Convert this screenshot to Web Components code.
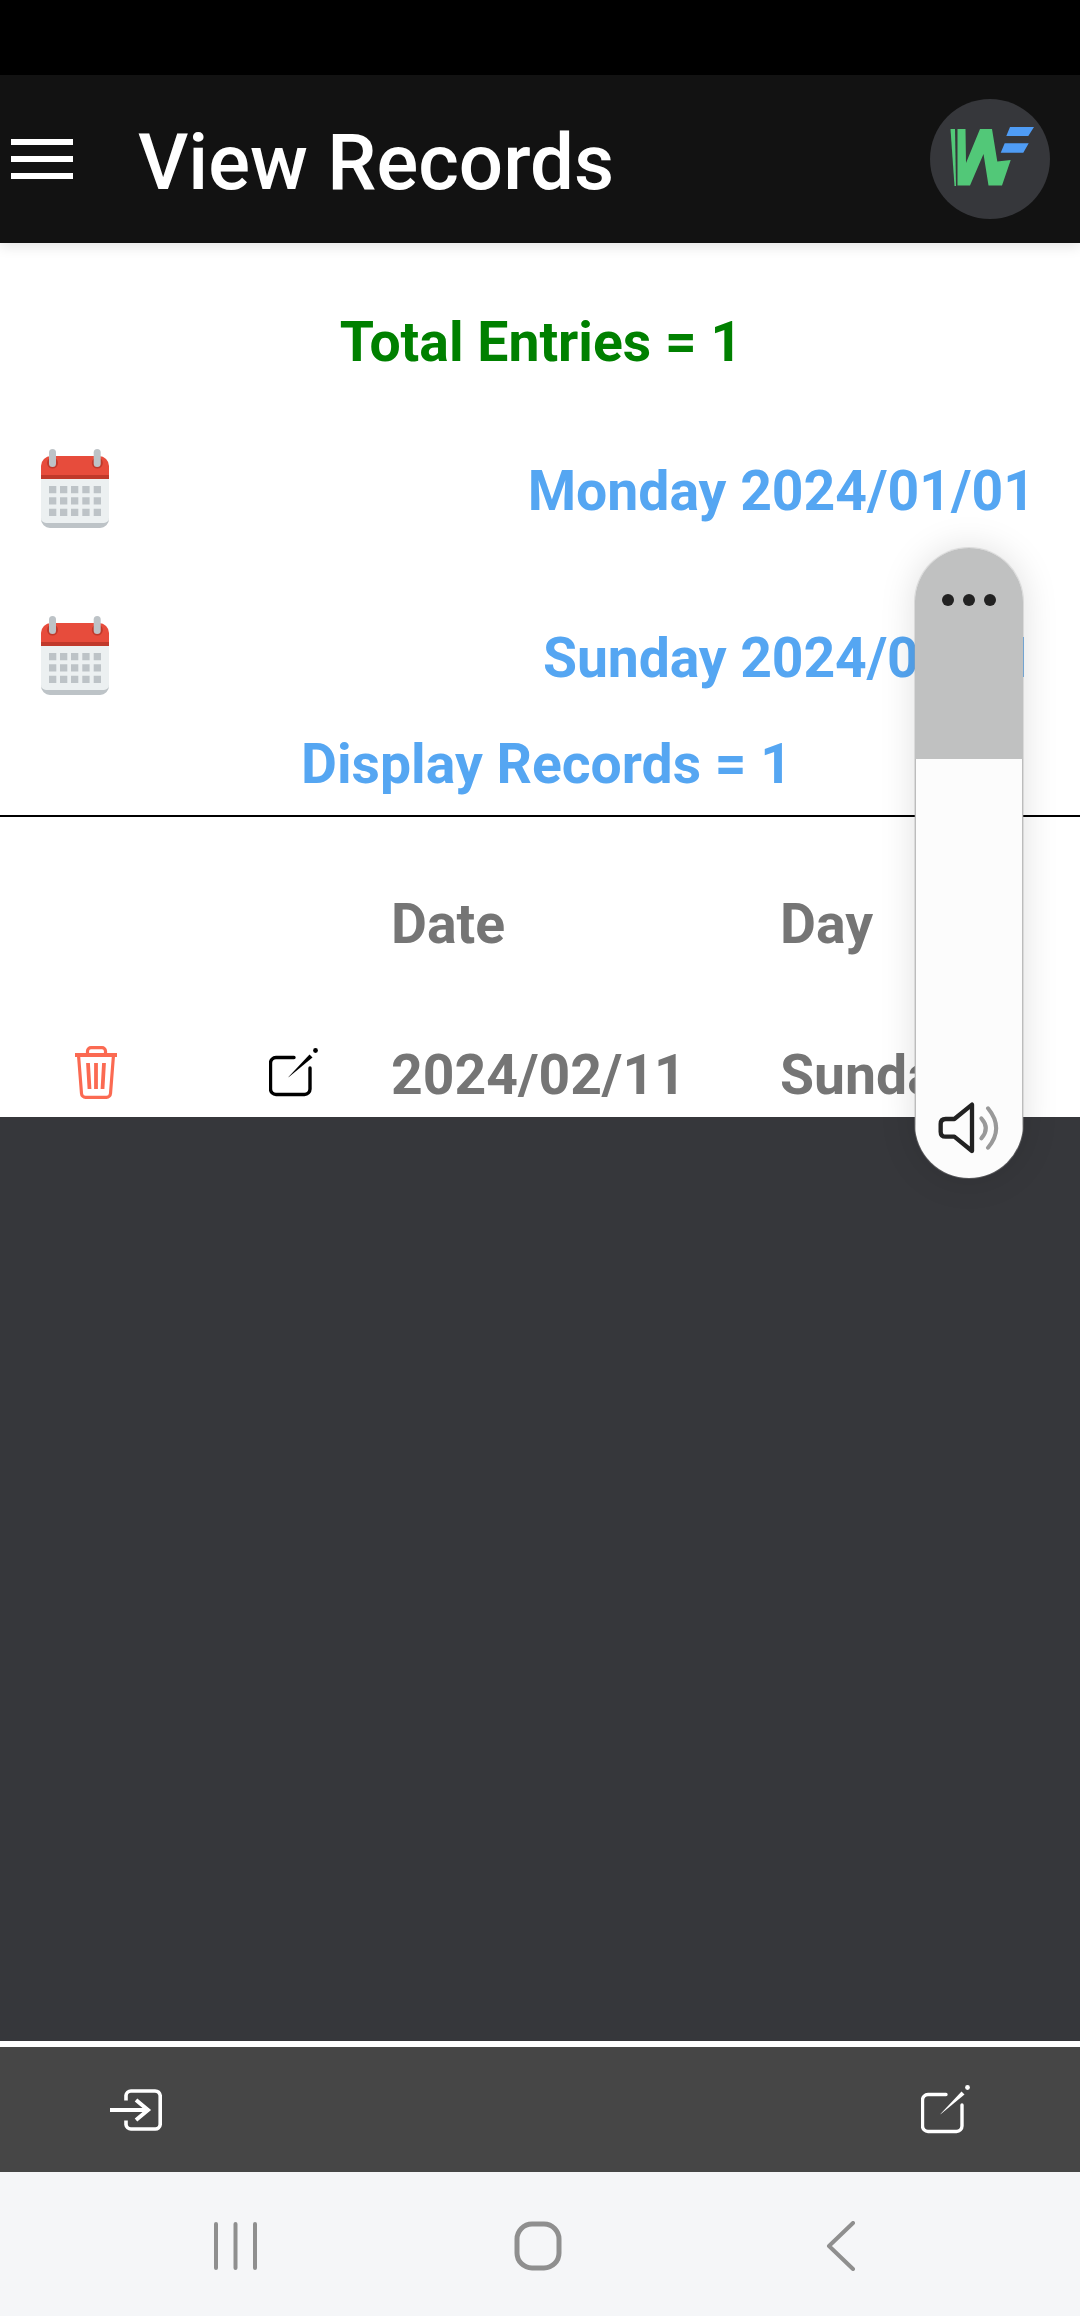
<!DOCTYPE html>
<html lang="en"><head><meta charset="utf-8"><title>View Records</title>
<style>
html,body{margin:0;padding:0;background:#36373b}
body{width:1080px;height:2316px;overflow:hidden;font-family:Roboto,"Liberation Sans",sans-serif}
</style></head><body>
<template id="t-app"><style>
:host{display:flex;flex-direction:column;width:1080px;height:2316px;position:relative;overflow:hidden}
.status{height:75px;background:#000;flex:none}
.content{flex:none;height:874px;background:#fff;display:flex;flex-direction:column;overflow:hidden}
.fill{flex:1;background:#36373b}
.gap{height:6px;background:#fff;flex:none}
</style>
<div class="status"></div><slot name="bar"></slot><div class="content"><slot></slot></div><div class="fill"></div><div class="gap"></div><slot name="foot"></slot><slot name="float"></slot></template>

<template id="t-bar"><style>
:host{display:flex;align-items:center;height:168px;background:#121212;flex:none;position:relative;z-index:1;box-shadow:0 4px 12px rgba(0,0,0,.1);padding:0 30px 0 11px}
.burger{width:62px;display:flex;flex-direction:column;gap:11px;margin-right:65px}
.burger i{display:block;height:6px;background:#fff}
h1{flex:1;margin:0;padding-top:8px;font:500 78px/84px Roboto,sans-serif;color:#fff}
svg{display:block;width:120px;height:120px}
</style><div class="burger"><i></i><i></i><i></i></div><h1><slot></slot></h1>
<svg viewBox="0 0 120 120"><circle cx="60" cy="60" r="60" fill="#36373b"/>
<path d="M20.500 30H25L26 87H24.500Z" fill="#52c878"/>
<path d="M27.500 30H35.500L36 64 50 30H62L67.300 62.500 80.700 61 72 86.500H58.500L53.500 55 40 86.500H27.500Z" fill="#52c878"/>
<path d="M80 28H104L98.300 37H76.300ZM74.700 44.300H98.700L93.300 53.700H70.700Z" fill="#4f9cf5"/></svg></template>

<template id="t-title"><style>
:host{display:block;text-align:center;font:700 55.3px/60px Roboto,sans-serif;color:var(--c,#008000);padding:var(--pad,0)}
</style><slot></slot></template>

<template id="t-date"><style>
:host{display:flex;align-items:center;justify-content:space-between;height:80px;padding:0 var(--r,49px) 0 41px;font:700 55.3px/60px Roboto,sans-serif;color:#55a6f2;margin-top:var(--mt,0);letter-spacing:var(--ls,0)}
svg{display:block;width:68px;height:80px;flex:none}
span{padding-top:6px}
</style><svg viewBox="0 0 68 80">
<path d="M10 7H58A10 10 0 0 1 68 17V30H0V17A10 10 0 0 1 10 7Z" fill="#e74c3c"/>
<rect y="26" width="68" height="4" fill="#c0392b"/>
<path d="M0 30H68V69A10 10 0 0 1 58 79H10A10 10 0 0 1 0 69Z" fill="#ecf0f1"/>
<path d="M0 69V70A9 9 0 0 0 9 79H59A9 9 0 0 0 68 70V69A5 5 0 0 1 63 74H5A5 5 0 0 1 0 69Z" fill="#bdc3c7"/>
<circle cx="11.500" cy="14" r="5.500" fill="#c0392b"/><circle cx="56.300" cy="14" r="5.500" fill="#c0392b"/>
<rect x="8" width="7" height="18" rx="3.500" fill="#bdc3c7"/><rect x="52.700" width="7" height="18" rx="3.500" fill="#bdc3c7"/>
<g fill="#bdc3c7"><path d="M8 37h7.300v7.300H8zM19 37h7.300v7.300H19zM30 37h7.300v7.300H30zM41.300 37h7.300v7.300h-7.300zM52.700 37h7.300v7.300h-7.300zM8 48.300h7.300v7.300H8zM19 48.300h7.300v7.300H19zM30 48.300h7.300v7.300H30zM41.300 48.300h7.300v7.300h-7.300zM52.700 48.300h7.300v7.300h-7.300zM8 59.700h7.300v7.300H8zM19 59.700h7.300v7.300H19zM30 59.700h7.300v7.300H30zM41.300 59.700h7.300v7.300h-7.300zM52.700 59.700h7.300v7.300h-7.300z"/></g>
</svg><span><slot></slot></span></template>

<template id="t-table"><style>
:host{display:grid;grid-template-columns:350px 389px 1fr;padding:0 0 0 41px;border-top:2px solid #000;font:700 55.3px/60px Roboto,sans-serif;color:#757575;white-space:nowrap}
.h{padding-top:78px}.c{padding-top:91px}
.icons{padding-top:91px;display:flex;align-items:flex-start;color:#000}
.trash{display:block;margin-left:34px}
x-edit{margin:2px 0 0 152px}
</style>
<span></span><span class="h">Date</span><span class="h">Day</span>
<div class="icons"><svg class="trash" width="42" height="53" viewBox="0 0 42 53" fill="none" stroke="#fb6a52" stroke-width="3.200" stroke-linejoin="round"><path d="M0 9H42" stroke-width="3.800"/><path d="M12.500 8V5A3.500 3.500 0 0 1 16 1.700H27A3.500 3.500 0 0 1 30.500 5V8"/><path d="M3.500 9 6.500 47.500A4 4 0 0 0 10.500 51.300H31.500A4 4 0 0 0 35.500 47.500L38.500 9"/><path d="M13 17 14.500 43M21 17V43M29 17 27.500 43" stroke-width="3.800"/></svg><x-edit></x-edit></div>
<span class="c"><slot name="date"></slot></span><span class="c"><slot name="day"></slot></span></template>

<template id="t-edit"><style>:host{display:block;width:49px;height:49px;flex:none}svg{display:block;width:49px;height:49px}</style>
<svg viewBox="0 0 49 49" fill="none" stroke="currentColor"><path d="M25 9.500H7A5.500 5.500 0 0 0 1.500 15V41A5.500 5.500 0 0 0 7 46.500H35.500A5.500 5.500 0 0 0 41 41V20" stroke-width="3.400" stroke-linecap="round"/><path d="M19 29.500 40.500 6.500 43.500 9.500 20.500 28.500Z" fill="currentColor" stroke="none"/><circle cx="46.500" cy="2.500" r="2.400" fill="currentColor" stroke="none"/></svg></template>

<template id="t-vol"><style>
:host{display:flex;flex-direction:column;position:absolute;z-index:3;left:915px;top:548px;width:108px;height:630px;border-radius:54px;overflow:hidden;background:#fcfcfc;box-sizing:border-box;box-shadow:0 0 0 1px rgba(170,170,170,.3),0 0 36px rgba(0,0,0,.13)}
.top{flex:none;height:211px;background:#c0c1c1;display:flex;justify-content:center;gap:9px;padding-top:46px;box-sizing:border-box}
.top i{display:block;width:12px;height:12px;border-radius:50%;background:#222}
.bot{flex:1;display:flex;align-items:flex-end;justify-content:center;padding-bottom:23px;border:solid #bcbcbc;border-width:0 1.500px}
svg{display:block;width:65px;height:55px}
</style><div class="top"><i></i><i></i><i></i></div><div class="bot">
<svg viewBox="170 180 195 165" fill="none" stroke-linecap="round" stroke-linejoin="round"><path d="M275 194V333L222 290H196Q181 290 181 275V252Q181 237 196 237H222Z" stroke="#222" stroke-width="13"/><path d="M303 235Q330 265 303 295" stroke="#999" stroke-width="12"/><path d="M323 205Q372 265 323 323" stroke="#999" stroke-width="12"/></svg></div></template>

<template id="t-foot"><style>
:host{display:block;flex:none}
.bar{height:125px;background:#464646;display:flex;align-items:center;justify-content:space-between;padding:0 110px 0 110px;color:#fff}
.exit{display:block;width:52px;height:42px}
.nav{height:144px;background:#f5f6f8;display:flex;align-items:center;padding:4px 0 0 214px;box-sizing:border-box}
.nav svg{display:block;height:50px;flex:none}
</style><div class="bar"><svg class="exit" viewBox="0 0 52 42" fill="none" stroke="#fff" stroke-width="3.600"><path d="M16 11.500V6.500A5 5 0 0 1 21 2H45A5.500 5.500 0 0 1 50.200 6.500V35.500A5 5 0 0 1 45 40H21A5 5 0 0 1 16 35.500V31.500"/><path d="M0 21H38M26 11 38 21 26 31" stroke-width="4"/></svg><x-edit></x-edit></div>
<div class="nav">
<svg viewBox="0 0 44 50" style="width:44px" stroke="#8f8f8f" stroke-width="4" stroke-linecap="round"><path d="M2 3V47M21.500 3V47M41 3V47"/></svg>
<svg viewBox="0 0 48 50" style="width:48px;margin-left:256px" fill="none" stroke="#8f8f8f" stroke-width="5"><rect x="3" y="3" width="42" height="44" rx="15"/></svg>
<svg viewBox="0 0 30 50" style="width:30px;margin-left:264px" fill="none" stroke="#8f8f8f" stroke-width="4" stroke-linecap="round" stroke-linejoin="round"><path d="M27 2 3 25 27 48"/></svg>
</div></template>

<x-app>
<x-bar slot="bar">View Records</x-bar>
<x-title style="--pad:70px 0 0 0;margin-left:2px">Total Entries = 1</x-title>
<x-date style="--mt:76px;--r:45px">Monday 2024/01/01</x-date>
<x-date style="--mt:87px;--r:46px;--ls:-.1px">Sunday 2024/02/11</x-date>
<x-title style="--c:#55a6f2;--pad:39px 0 0 0;margin-left:13px">Display Records = 1</x-title>
<x-table style="margin-top:20px"><span slot="date">2024/02/11</span><span slot="day">Sunday</span></x-table>
<x-foot slot="foot"></x-foot>
<x-vol slot="float"></x-vol>
</x-app>
<script>
function def(name,tid){customElements.define(name,class extends HTMLElement{constructor(){super();this.attachShadow({mode:'open'}).appendChild(document.getElementById(tid).content.cloneNode(true));}});}
['edit','app','bar','title','date','table','vol','foot'].forEach(n=>def('x-'+n,'t-'+n));
</script>
</body></html>
